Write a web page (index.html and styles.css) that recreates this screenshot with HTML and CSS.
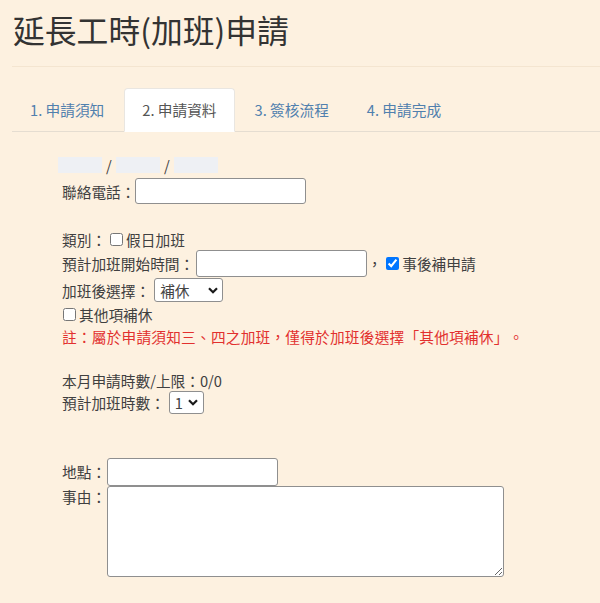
FILE: index.html
```html
<!DOCTYPE html>
<html lang="zh-Hant">
<head>
  <meta charset="UTF-8" />
  <meta name="viewport" content="width=device-width, initial-scale=1.0" />
  <title>延長工時(加班)申請</title>
  <link rel="stylesheet" href="styles.css">
</head>
<body>

  <header class="page-head">
    <h1>延長工時(加班)申請</h1>
  </header>

  <ul class="tabs">
    <li><a href="#">1. 申請須知</a></li>
    <li class="active"><a href="#">2. 申請資料</a></li>
    <li><a href="#">3. 簽核流程</a></li>
    <li><a href="#">4. 申請完成</a></li>
  </ul>

  <form class="apply">
    <div class="row names">
      <span class="mask"></span><span class="slash">/</span>
      <span class="mask"></span><span class="slash">/</span>
      <span class="mask"></span>
    </div>
    <div class="row phone">
      <span>聯絡電話：</span><input type="text" class="phone-input">
    </div>

    <div class="row spacer"></div>

    <div class="row">
      <span>類別：</span><label><input type="checkbox">假日加班</label>
    </div>
    <div class="row start">
      <span>預計加班開始時間：</span><input type="text" class="start-input"><span class="comma">，</span><label><input type="checkbox" checked>事後補申請</label>
    </div>
    <div class="row choose">
      <span>加班後選擇：</span>
      <span class="select-wrap">
        <select class="pick">
          <option>補休</option>
          <option>加班費</option>
        </select>
        <svg class="chev" width="10" height="7" viewBox="0 0 10 7"><path d="M1 1.2 L5 5.2 L9 1.2" fill="none" stroke="#1a1a1a" stroke-width="2.2"/></svg>
      </span>
    </div>
    <div class="row other">
      <label><input type="checkbox" class="flush">其他項補休</label>
    </div>
    <div class="row note">註：屬於申請須知三、四之加班，僅得於加班後選擇「其他項補休」。</div>

    <div class="row spacer"></div>

    <div class="row">本月申請時數/上限：0/0</div>
    <div class="row hours">
      <span>預計加班時數：</span>
      <span class="select-wrap">
        <select class="pick small">
          <option>1</option>
          <option>2</option>
          <option>3</option>
          <option>4</option>
        </select>
        <svg class="chev" width="10" height="7" viewBox="0 0 10 7"><path d="M1 1.2 L5 5.2 L9 1.2" fill="none" stroke="#1a1a1a" stroke-width="2.2"/></svg>
      </span>
    </div>

    <div class="detail">
      <div class="field">
        <span class="label">地點：</span><input type="text" class="place">
      </div>
      <div class="field">
        <span class="label">事由：</span><textarea class="reason"></textarea>
      </div>
    </div>
  </form>

</body>
</html>
```

FILE: styles.css
```css
* {
  margin: 0;
  padding: 0;
  box-sizing: border-box;
}
body {
  font-family: "Noto Sans CJK TC", "Noto Sans", sans-serif;
  font-size: 14.7px;
  background-color: #fdf1e0;
  color: #404040;
  text-spacing-trim: space-all;
  overflow: hidden;
}
.page-head {
  margin-left: 12px;
  padding-top: 8px;
  padding-bottom: 16px;
  border-bottom: 1px solid #f4e5d0;
}
.page-head h1 {
  font-size: 31.8px;
  font-weight: 400;
  line-height: 42px;
  color: #333;
  margin-left: 1px;
}
.tabs {
  list-style: none;
  display: flex;
  margin: 21px 0 0 12px;
  border-bottom: 1px solid #e5ddd1;
}
.tabs li {
  margin-right: 2px;
  margin-bottom: -1px;
}
.tabs a {
  display: block;
  height: 44px;
  line-height: 41px;
  padding: 0 17px;
  color: #5080ae;
  text-decoration: none;
  border: 1px solid transparent;
  border-radius: 4px 4px 0 0;
}
.tabs .active a {
  background-color: #fff;
  color: #555;
  border-color: #e9e6e1;
  border-bottom-color: #fff;
}
.apply {
  padding-left: 62px;
  padding-top: 22px;
}
.row {
  display: flex;
  align-items: center;
  height: 22px;
  white-space: nowrap;
}
.row label {
  display: flex;
  align-items: center;
}
.row input[type="checkbox"] {
  width: 13px;
  height: 13px;
  margin: 0 3px 0 4px;
}
.row input.flush {
  margin-left: 1px;
}
.names .mask {
  display: inline-block;
  width: 44px;
  height: 16px;
  background-color: #eef0f4;
}
.names .mask:first-child {
  margin-left: -4px;
}
.names .slash {
  width: 14px;
  text-align: center;
}
.phone {
  height: 30px;
}
input[type="text"], textarea, select {
  font-family: inherit;
  font-size: 14.7px;
  background-color: #fff;
  border: 1px solid #8f8f8f;
  border-radius: 3px;
  color: #333;
}
.phone-input {
  width: 171px;
  height: 26px;
}
.start {
  height: 27px;
}
.start-input {
  width: 171px;
  height: 27px;
  margin-left: 2px;
}
.comma {
  width: 15px;
}
.choose {
  height: 26px;
}
.select-wrap {
  position: relative;
  display: flex;
  margin-left: 4px;
}
.pick {
  appearance: none;
  width: 69px;
  height: 24px;
  padding-left: 5px;
  color: #444;
}
.pick.small {
  width: 35px;
  height: 23px;
  padding-left: 5px;
}
.chev {
  position: absolute;
  right: 5px;
  top: 9px;
  pointer-events: none;
}
.hours .chev {
  right: 6px;
  top: 8px;
}
.other {
  height: 23px;
}
.note {
  height: 21px;
  color: #e2302e;
  letter-spacing: 0.2px;
}
.hours {
  height: 23px;
}
.detail {
  margin-top: 44px;
}
.field {
  display: flex;
  align-items: flex-start;
}
.field .label {
  width: 45px;
  line-height: 22px;
  white-space: nowrap;
}
.field:first-child .label {
  line-height: 28px;
}
.place {
  width: 171px;
  height: 28px;
}
.reason {
  width: 397px;
  height: 91px;
  resize: both;
}
```
